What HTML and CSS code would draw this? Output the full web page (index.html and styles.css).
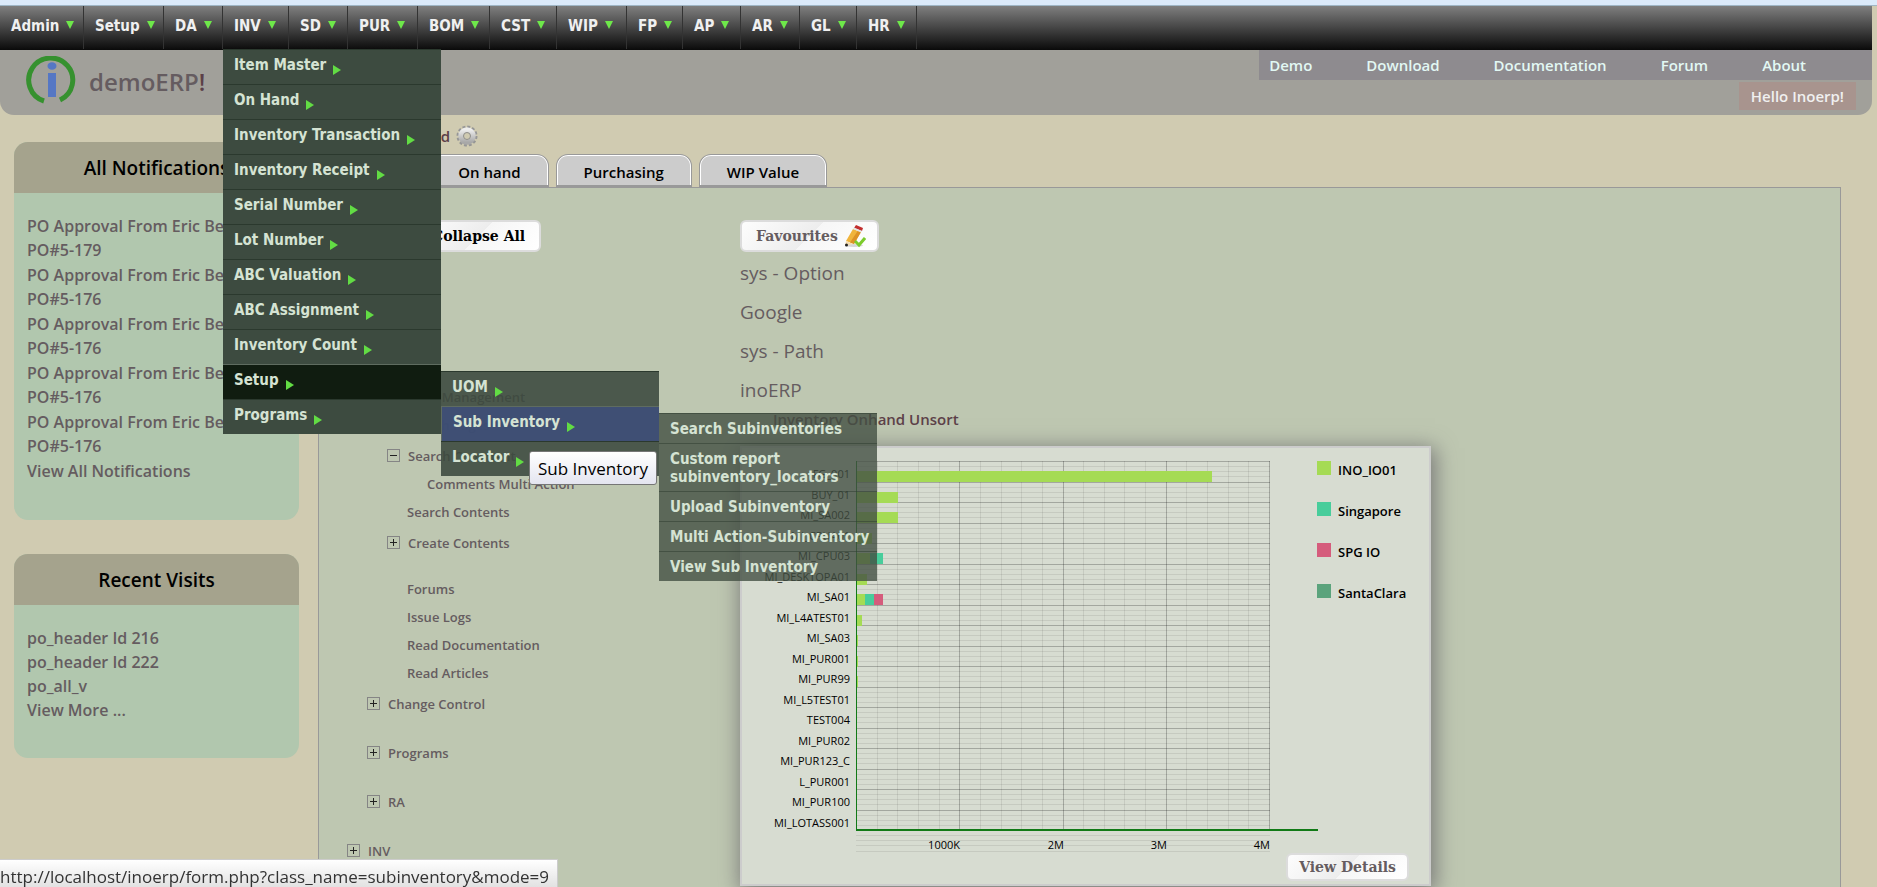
FILE: index.html
```html
<!DOCTYPE html>
<html lang="en">
<head>
<meta charset="utf-8">
<title>demoERP!</title>
<link rel="stylesheet" href="styles.css">
</head>
<body>
<div class="strip"></div>
<nav class="menubar" aria-label="Main">
  <ul class="menu">
    <li><a href="#">Admin</a></li>
    <li><a href="#">Setup</a></li>
    <li><a href="#">DA</a></li>
    <li class="open"><a href="#">INV</a>
      <ul class="drop">
        <li><a class="more" href="#">Item Master</a></li>
        <li><a class="more" href="#">On Hand</a></li>
        <li><a class="more" href="#">Inventory Transaction</a></li>
        <li><a class="more" href="#">Inventory Receipt</a></li>
        <li><a class="more" href="#">Serial Number</a></li>
        <li><a class="more" href="#">Lot Number</a></li>
        <li><a class="more" href="#">ABC Valuation</a></li>
        <li><a class="more" href="#">ABC Assignment</a></li>
        <li><a class="more" href="#">Inventory Count</a></li>
        <li class="current"><a class="more" href="#">Setup</a>
          <ul class="drop second">
            <li><a class="more" href="#">UOM</a></li>
            <li class="hovered"><a class="more" href="#">Sub Inventory</a>
              <ul class="drop third">
                <li><a href="#">Search Subinventories</a></li>
                <li><a href="#">Custom report subinventory_locators</a></li>
                <li><a href="#">Upload Subinventory</a></li>
                <li><a href="#">Multi Action-Subinventory</a></li>
                <li><a href="#">View Sub Inventory</a></li>
              </ul>
            </li>
            <li><a class="more" href="#">Locator</a></li>
          </ul>
        </li>
        <li><a class="more" href="#">Programs</a></li>
      </ul>
    </li>
    <li><a href="#">SD</a></li>
    <li><a href="#">PUR</a></li>
    <li><a href="#">BOM</a></li>
    <li><a href="#">CST</a></li>
    <li><a href="#">WIP</a></li>
    <li><a href="#">FP</a></li>
    <li><a href="#">AP</a></li>
    <li><a href="#">AR</a></li>
    <li><a href="#">GL</a></li>
    <li><a href="#">HR</a></li>
  </ul>
</nav>

<header class="header">
  <a class="brand" href="#">
    <svg class="logo" viewBox="0 0 50 50" aria-hidden="true">
      <path d="M18 45A22 22 0 1 1 34 44" fill="none" stroke="#36912f" stroke-width="5"/>
      <ellipse cx="26" cy="10" rx="4.500" ry="3.800" fill="#5577c4"/>
      <rect x="22" y="17" width="8" height="24" fill="#5577c4"/>
    </svg>
    <span>demoERP<b>!</b></span>
  </a>
  <div class="header-side">
    <nav class="links" aria-label="Site">
      <a href="#">Demo</a><a href="#">Download</a><a href="#">Documentation</a><a href="#">Forum</a><a href="#">About</a>
    </nav>
    <a class="hello" href="#">Hello Inoerp!</a>
  </div>
</header>

<div class="page">
  <aside class="side">
    <section class="block">
      <h2>All Notifications</h2>
      <ul class="notes">
        <li><a href="#">PO Approval From Eric Benson PO#5-179</a></li>
        <li><a href="#">PO Approval From Eric Benson PO#5-176</a></li>
        <li><a href="#">PO Approval From Eric Benson PO#5-176</a></li>
        <li><a href="#">PO Approval From Eric Benson PO#5-176</a></li>
        <li><a href="#">PO Approval From Eric Benson PO#5-176</a></li>
        <li><a href="#">View All Notifications</a></li>
      </ul>
    </section>
    <section class="block">
      <h2>Recent Visits</h2>
      <ul>
        <li><a href="#">po_header Id 216</a></li>
        <li><a href="#">po_header Id 222</a></li>
        <li><a href="#">po_all_v</a></li>
        <li><a href="#">View More ...</a></li>
      </ul>
    </section>
  </aside>

  <main class="main">
    <h1 class="title">Dashboard
      <svg class="gear" viewBox="0 0 22 22" aria-hidden="true">
        <defs>
          <linearGradient id="metal" x1="0" y1="0" x2="0" y2="1">
            <stop offset="0" stop-color="#ededed"/><stop offset="1" stop-color="#a8a8a8"/>
          </linearGradient>
        </defs>
        <circle cx="11" cy="11" r="9.200" fill="none" stroke="#969696" stroke-width="2.600" stroke-dasharray="2.900 1.917"/>
        <circle cx="11" cy="11" r="6.200" fill="none" stroke="url(#metal)" stroke-width="5"/>
        <circle cx="11" cy="11" r="3.500" fill="#d0cbb1" stroke="#8e8e8e"/>
      </svg>
    </h1>
    <div class="tabs">
      <button class="tab" type="button">Main</button>
      <button class="tab" type="button">On hand</button>
      <button class="tab" type="button">Purchasing</button>
      <button class="tab" type="button">WIP Value</button>
    </div>
    <div class="panel">
      <div class="tree-col">
        <button class="btn dark" type="button">Collapse All</button>
        <ul class="tree">
          <li class="node expanded"><button class="toggle" type="button" aria-label="Collapse"></button><a href="#">Content Management</a>
            <ul>
              <li><a href="#">Search Pages</a></li>
              <li class="node expanded"><button class="toggle" type="button" aria-label="Collapse"></button><a href="#">Search Comment</a>
                <ul><li><a href="#">Comments Multi Action</a></li></ul>
              </li>
              <li><a href="#">Search Contents</a></li>
              <li class="node closed"><button class="toggle" type="button" aria-label="Expand"></button><a href="#">Create Contents</a></li>
              <li><a href="#">Forums</a></li>
              <li><a href="#">Issue Logs</a></li>
              <li><a href="#">Read Documentation</a></li>
              <li><a href="#">Read Articles</a></li>
            </ul>
          </li>
          <li class="node closed"><button class="toggle" type="button" aria-label="Expand"></button><a href="#">Change Control</a></li>
          <li class="node closed"><button class="toggle" type="button" aria-label="Expand"></button><a href="#">Programs</a></li>
          <li class="node closed"><button class="toggle" type="button" aria-label="Expand"></button><a href="#">RA</a></li>
          <li class="node closed root"><button class="toggle" type="button" aria-label="Expand"></button><a href="#">INV</a></li>
        </ul>
      </div>
      <div class="fav-col">
        <button class="btn fav" type="button">Favourites
          <svg viewBox="0 0 22 24" aria-hidden="true">
            <ellipse cx="10" cy="21.500" rx="9" ry="1.500" fill="#bdbdbd" opacity=".6"/>
            <path d="M9 5l8 3-7 12-8-3z" fill="#f0b43c"/>
            <path d="M14 6.500l3 1.500-7 12-4-1.500z" fill="#dc9226"/>
            <path d="M10 4l2-3 7 3-1 3z" fill="#c22e2e"/>
            <path d="M9 5l1-1.500 8 3.500-1 1.500z" fill="#e4e4e4"/>
            <path d="M2 17l7 3-8 2z" fill="#f3dcb0"/><circle cx="2.500" cy="21" r="1.500" fill="#222"/>
            <path d="M11 17l4 4 6-7" fill="none" stroke="#7ccb2c" stroke-width="3"/>
          </svg>
        </button>
        <ul class="favs">
          <li><a href="#">sys - Option</a></li>
          <li><a href="#">Google</a></li>
          <li><a href="#">sys - Path</a></li>
          <li><a href="#">inoERP</a></li>
        </ul>
        <h3 class="chart-title">Inventory Onhand Unsort</h3>
        <div class="chart-card">
          <svg class="chart" id="chart" viewBox="0 0 687 404" role="img" aria-label="Inventory Onhand Unsort"></svg>
          <button class="btn details" type="button">View Details</button>
        </div>
      </div>
    </div>
  </main>
</div>
<div class="tooltip" role="tooltip">Sub Inventory</div>
<div class="status"><span>http://localhost/inoerp/form.php?class_name=subinventory&amp;mode=9</span></div>
<script src="chart.js"></script>
</body>
</html>
```
FILE: chart.js
```javascript
(function () {
  var svg = document.getElementById('chart');
  var NS = 'http://www.w3.org/2000/svg';
  var left = 114, top = 13, right = 527, rowH = 20.5;
  var rows = [
    ['FG_001', [355]], ['BUY_01', [41]], ['MI_SA002', [41]], ['MI_CPUA01', [15]],
    ['MI_CPU03', [13, 13]], ['MI_DESKTOPA01', [10]], ['MI_SA01', [8, 9, 9]],
    ['MI_L4ATEST01', [5]], ['MI_SA03', [1]], ['MI_PUR001', [1]], ['MI_PUR99', [1]],
    ['MI_L5TEST01', []], ['TEST004', []], ['MI_PUR02', []], ['MI_PUR123_C', []],
    ['L_PUR001', []], ['MI_PUR100', []], ['MI_LOTASS001', []]
  ];
  var series = [['INO_IO01', 'lime'], ['Singapore', 'teal'], ['SPG IO', 'pink'], ['SantaClara', 'green']];
  var bottom = top + rows.length * rowH;

  function add(name, attrs, text) {
    var el = document.createElementNS(NS, name);
    for (var k in attrs) el.setAttribute(k, attrs[k]);
    if (text) el.textContent = text;
    svg.appendChild(el);
  }
  function rect(x, y, w, h, cls) {
    add('rect', { x: x, y: y, width: w, height: h, 'class': cls });
  }

  var i, x, y;
  for (i = 0; i <= rows.length * 4 + 4; i++) {
    y = Math.round(top + i * rowH / 4);
    if (i === rows.length * 4) continue;
    rect(left, y, right - left + 1, 1, i < rows.length * 4 && i % 4 === 0 ? 'major' : 'minor');
  }
  for (i = 1; i <= 20; i++) {
    x = Math.round(left + i * (right - left) / 20);
    rect(x, top, 1, bottom - top, i % 5 === 0 ? 'major' : 'minor');
  }
  rows.forEach(function (row, n) {
    x = left + 1;
    y = Math.round(top + n * rowH + 10);
    row[1].forEach(function (w, s) {
      rect(x, y, w, 11, 'bar ' + series[s][1]);
      x += w;
    });
    add('text', { x: left - 6, y: Math.round(top + n * rowH + 17), 'class': 'tick' }, row[0]);
  });
  rect(left, top, 1, bottom - top, 'axis');
  rect(left, bottom - 1, 462, 2, 'axis');
  ['1000K', '2M', '3M', '4M'].forEach(function (label, n) {
    add('text', { x: Math.round(left + (n + 1) * (right - left) / 4) + 1, y: 401, 'class': 'tick' }, label);
  });
  series.forEach(function (s, n) {
    rect(575, top + n * 41, 14, 14, 'bar ' + s[1]);
    add('text', { x: 596, y: top + n * 41 + 14, 'class': 'legend' }, s[0]);
  });
})();
```
FILE: styles.css
```css
*, *::after { box-sizing: border-box; }
body {
  margin: 0;
  min-height: 100vh;
  display: flex;
  flex-direction: column;
  background: #d0cbb1;
  font: 600 15px/24px "Open Sans", "Trebuchet MS", sans-serif;
  color: #655c60;
}
a { color: inherit; text-decoration: none; }
ul { list-style: none; margin: 0; padding: 0; }
h1, h2, h3 { margin: 0; font-weight: 600; }
button { font: inherit; margin: 0; }

.strip { height: 6px; background: #dbeafa; border-bottom: 1px solid #9fb6c6; }

/* menu bar */
.menubar {
  height: 44px;
  margin-right: 5px;
  background: linear-gradient(#7f7f7f, #4a4a4a 45%, #0a0a0a);
  font: 700 15px/18px "DejaVu Sans Condensed", Tahoma, sans-serif;
}
.menu {
  display: grid;
  grid-template-columns: 84px 80px 59px 66px 59px 70px 72px 67px 70px 56px 58px 59px 57px 60px;
  height: 43px;
}
.menu > li { position: relative; border-right: 1px solid #333; }
.menu > li > a {
  display: flex;
  gap: 7px;
  padding: 11px 0 0 11px;
  color: #f0f0f0;
}
.menu > li > a::after {
  content: "";
  margin-top: 4px;
  width: 8px;
  height: 8px;
  border: 4px solid transparent;
  border-top: 8px solid #6ee84a;
  border-bottom: 0;
}
.drop {
  position: absolute;
  z-index: 5;
  top: 43px;
  left: 0;
  width: 218px;
  background: #3d4b40;
  color: #d5e3d3;
}
.drop > li { position: relative; border-top: 1px solid #2b392e; }
.drop a { display: flex; gap: 7px; min-height: 34px; padding: 6px 11px 9px; }
.more::after {
  content: "";
  margin-top: 9px;
  width: 8px;
  height: 10px;
  border: 5px solid transparent;
  border-left: 8px solid #62dc44;
  border-right: 0;
}
.drop > .current { background: #101c10; border-top-color: #5f6c60; }
.drop .second { top: 6px; left: 218px; background: rgba(59, 73, 61, .88); }
.drop > .hovered { background: rgba(61, 77, 124, .84); border: 0 solid #5f6c60; border-width: 1px 0 0 1px; }
.drop .third { top: 6px; left: 217px; background: rgba(67, 80, 68, .8); }
.third > li { border-top-color: rgba(43, 57, 46, .5); }
.drop.third a { min-height: 29px; padding: 6px 5px 5px 11px; }

/* header */
.header {
  display: flex;
  justify-content: space-between;
  margin-right: 5px;
  min-height: 65px;
  background: #a1a09a;
  border-radius: 0 0 14px 14px;
}
.brand { display: flex; gap: 13px; padding: 6px 0 0 26px; font-size: 24px; line-height: 52px; }
.brand b { color: #5c4048; font-weight: 600; }
.logo { width: 50px; height: 50px; }
.header-side { display: flex; flex-direction: column; align-items: flex-end; gap: 2px; color: #e2f8f4; }
.links { display: flex; gap: 54px; padding: 3px 66px 3px 10px; background: #8e8b8f; }
.hello { margin-right: 16px; padding: 2px 12px; background: #a8948e; color: #f0f0f0; }

/* page columns */
.page { flex: 1; display: flex; gap: 19px; padding: 0 36px 0 14px; }
.side { flex: 0 0 285px; padding-top: 27px; display: flex; flex-direction: column; gap: 34px; font-size: 16px; }
.block { background: #b1c7ae; border-radius: 14px; overflow: hidden; padding-bottom: 36px; }
.block h2 { padding: 14px 0 13px; background: #a5a38d; color: #000; font-size: 19px; text-align: center; }
.block ul { padding: 21px 13px 0; }
.notes li { padding-bottom: 1px; }

.main { flex: 1; display: flex; flex-direction: column; }
.title { display: flex; align-items: center; justify-content: flex-end; gap: 6px; width: 160px; padding-top: 9px; font-size: 15px; line-height: 24px; color: #5c4048; }
.gear { width: 22px; height: 22px; }
.tabs { display: flex; gap: 7px; padding: 6px 0 0 13px; }
.tab {
  padding: 5px 27px 1px;
  border: 1px solid #999;
  border-bottom-width: 2px;
  border-radius: 12px 12px 0 0;
  background: #ccc;
  box-shadow: inset 0 1px #fff, inset 1px 0 #fff, inset -1px 0 #fff;
  color: #000;
}
.panel {
  flex: 1;
  display: flex;
  border: 1px solid #999;
  border-bottom: 0;
  background: #bec7b1;
}
.btn {
  border: 2px solid #dcdcdc;
  border-radius: 6px;
  background: linear-gradient(135deg, #fdfdfd, #ededed 50%, #f6f6f6 50%, #fff);
  font: 700 14px/22px "DejaVu Serif", Georgia, serif;
  color: #655c60;
}
.btn.dark { color: #000; padding: 3px 14px; }
.tree-col { flex: 0 0 421px; padding-top: 32px; }
.tree-col .btn { display: block; margin-left: 97px; }

.tree { padding: 128px 0 0 48px; font-size: 13px; line-height: 28px; }
.tree ul { padding-left: 20px; }
.tree li { padding-left: 20px; }
.tree ul ul { padding-left: 20px; }
.tree .node { padding: 3px 0 0; }
.tree .closed { padding-bottom: 18px; }
.tree .root { margin-left: -20px; padding-bottom: 0; }
.toggle {
  width: 13px;
  height: 13px;
  padding: 0;
  margin-right: 8px;
  border: 1px solid #858585;
  background: linear-gradient(#222, #222) center / 7px 1px no-repeat;
}
.closed .toggle {
  background: linear-gradient(#222, #222) center / 7px 1px no-repeat, linear-gradient(#222, #222) center / 1px 7px no-repeat;
}

.fav-col { flex: 1; padding-top: 32px; }
.fav { display: flex; align-items: center; gap: 6px; padding: 2px 11px 2px 14px; }
.fav svg { width: 22px; height: 24px; }
.favs { padding-top: 2px; font-size: 19px; line-height: 39px; font-weight: 500; }
.chart-title { padding-left: 33px; color: #5c4048; font-size: 15px; line-height: 18px; }
.chart-card {
  width: 691px;
  margin-top: 18px;
  padding-bottom: 3px;
  border: 2px solid #ccc;
  background: #d7dcd1;
  box-shadow: 2px 4px 20px 2px #777;
  display: flex;
  flex-direction: column;
}
.details { align-self: flex-end; margin: 1px 20px 0 0; padding: 1px 11px; }

.chart { display: block; shape-rendering: crispEdges; }
.chart .minor { fill: rgba(0, 0, 0, .08); }
.chart .major { fill: rgba(0, 0, 0, .24); }
.chart .axis { fill: #117a16; }
.chart .lime { fill: #a5db54; }
.chart .teal { fill: #48cd9b; }
.chart .pink { fill: #d55c7c; }
.chart .green { fill: #5ba37c; }
.tick { font-size: 11px; font-weight: 500; text-anchor: end; fill: #000; }
.legend { font-size: 13px; fill: #000; }

/* browser overlays */
.tooltip {
  position: absolute;
  z-index: 9;
  left: 529px;
  top: 451px;
  padding: 4px 8px 2px;
  border: 1px solid #767676;
  border-radius: 3px;
  background: linear-gradient(#fff, #e4e5f0);
  color: #000;
  font: 400 17px/26px "Open Sans", sans-serif;
}
.status {
  position: fixed;
  left: 0;
  bottom: 0;
  z-index: 9;
  border: 1px solid #ccc;
  border-width: 1px 1px 0 0;
  padding: 7px 8px 0 0;
  background: linear-gradient(#fff, #e2e2e2);
  color: #333;
  font: 400 17px/20px "Open Sans", sans-serif;
}
.status span { display: block; }
```
